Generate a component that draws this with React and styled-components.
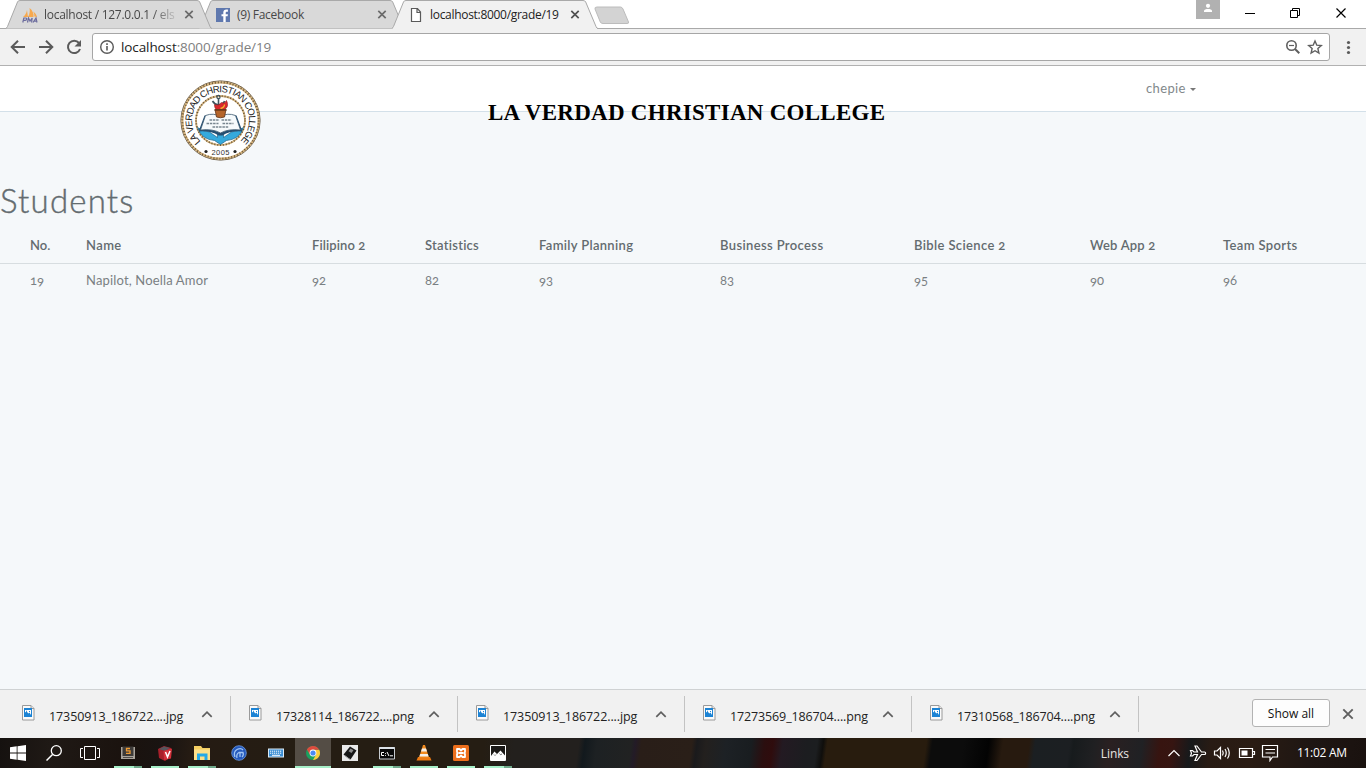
import React from "react";
import styled, { createGlobalStyle, css } from "styled-components";

const ui = `"Open Sans", "Noto Sans", sans-serif`;
const pageFont = `Lato, "Open Sans", sans-serif`;

const Global = createGlobalStyle`
  * { box-sizing: border-box; }
  body { margin: 0; background: #f5f8fa; }
  svg { display: block; flex: none; }
`;

const Screen = styled.div`
  width: 1366px;
  height: 768px;
  overflow: hidden;
  display: flex;
  flex-direction: column;
  font-family: ${ui};
`;

const Label = styled.span`
  white-space: pre;
  letter-spacing: ${(p) => p.$track || 0}px;
`;

/* ---------- browser frame ---------- */

const TabStrip = styled.div`
  height: 29px;
  flex: none;
  display: flex;
  background: #fff;
  box-shadow: inset 0 -1px #a9a9a9;
  padding-left: 6px;
`;

const TabBox = styled.div`
  position: relative;
  z-index: ${(p) => p.$z};
  width: 206px;
  height: 29px;
  flex: none;
  margin-right: -13px;
  padding: 2px 0 2px 16px;
  display: flex;
  align-items: center;
  font-size: 12px;
  color: ${(p) => (p.$active ? "#222" : "#484848")};
`;

const TabShape = styled.svg`
  position: absolute;
  z-index: -1;
  left: 0;
  top: 0;
`;

const TabTitle = styled.div`
  width: 136px;
  margin-left: 6px;
  white-space: nowrap;
  ${(p) => p.$fade && css`
    mask-image: linear-gradient(to right, #000 108px, transparent 136px);
  `}
`;

const NewTab = styled.svg`
  margin: 6px 0 0 9px;
`;

const WindowButtons = styled.div`
  margin-left: auto;
  padding-right: 20px;
  display: flex;
`;

const Toolbar = styled.div`
  height: 37px;
  flex: none;
  display: flex;
  align-items: flex-start;
  padding: 4px 0 0 10px;
  background: #f1f1f1;
  border-bottom: 1px solid #b1b1b1;
`;

const NavIcons = styled.div`
  display: flex;
  gap: 12px;
  width: 82px;
  padding-top: 6px;
`;

const AddressBar = styled.div`
  width: 1238px;
  height: 28px;
  display: flex;
  align-items: center;
  padding: 0 6px;
  background: #fff;
  border: 1px solid #a6a6a6;
  border-radius: 3px;
  font-size: 13.5px;
  color: #808080;
  b { font-weight: 400; color: #222; }
`;

const Url = styled.div`
  flex: 1;
  margin-left: 6px;
  white-space: nowrap;
  letter-spacing: ${(p) => p.$track}px;
`;

/* ---------- web page ---------- */

const Page = styled.main`
  flex: 1;
  background: #f5f8fa;
  font-family: ${pageFont};
  color: #636b6f;
`;

const Header = styled.header`
  height: 46px;
  display: flex;
  align-items: flex-start;
  background: #fff;
  border-bottom: 1px solid #d3e0e9;
  padding-left: 179px;
`;

const Crest = styled.svg`
  margin-top: 13px;
`;

const College = styled.div`
  margin: 34px 0 0 227px;
  width: 400px;
  white-space: nowrap;
  font: bold 23px/26px "Liberation Serif", serif;
  letter-spacing: ${(p) => p.$track}px;
  color: #000;
`;

const UserMenu = styled.div`
  margin: 12px 0 0 258px;
  display: flex;
  align-items: center;
  gap: 4px;
  font-size: 13px;
  line-height: 20px;
  font-weight: 400;
  color: #82888b;
`;

const Caret = styled.i`
  border: 3px solid transparent;
  border-top-color: #777;
  border-bottom: 0;
  margin-top: 2px;
`;

const Title = styled.h1`
  margin: 68px 0 8px;
  font-size: 33px;
  line-height: 40px;
  font-weight: 300;
  -webkit-text-stroke: 0.4px #636b6f;
  letter-spacing: ${(p) => p.$track}px;
`;

const Grades = styled.table`
  width: 100%;
  table-layout: fixed;
  border-collapse: collapse;
  font-size: 13px;
  line-height: 18px;
  text-align: left;
  white-space: nowrap;
  font-feature-settings: "onum";
  tr > :first-child { padding-left: 30px; }
`;

const Th = styled.th`
  padding: 7px 0 8px;
  height: 35px;
  width: ${(p) => p.$w ? p.$w + "px" : "auto"};
  font-weight: 600;
  border-bottom: 1px solid #d7dde0;
`;

const Td = styled.td`
  padding: 7px 0 9px;
  height: 34px;
  color: #7a8083;
`;

/* ---------- download shelf ---------- */

const Shelf = styled.div`
  height: 49px;
  flex: none;
  display: flex;
  align-items: center;
  background: #f1f1f1;
  border-top: 1px solid #cfd2d3;
`;

const Download = styled.div`
  width: ${(p) => (p.$first ? 231 : 227)}px;
  height: 36px;
  padding-left: ${(p) => (p.$first ? 22 : 18)}px;
  display: flex;
  align-items: center;
  border-right: 1px solid #c3c3c3;
  font-size: 12.5px;
  color: #222;
`;

const FileArt = styled.svg`
  margin-bottom: 3px;
`;

const FileName = styled.div`
  width: 141px;
  margin: 5px 11px 0 14px;
  white-space: nowrap;
`;

const ShowAll = styled.button`
  width: 78px;
  height: 28px;
  margin: 0 12px 2px auto;
  padding: 0;
  background: #fdfdfd;
  border: 1px solid #b3b3b3;
  border-radius: 3px;
  font: 12px ${ui};
  color: #111;
  white-space: nowrap;
`;

/* ---------- task bar ---------- */

const Taskbar = styled.div`
  height: 30px;
  flex: none;
  display: flex;
  color: #e8e4e2;
  font-size: 12px;
  background: linear-gradient(98deg, #15110f 0, #1f1915 50px, #1a120e 130px, #191412 165px, #251b13 190px,
    #251d13 290px, #251d13 480px, #23201d 510px, #23201e 574px, #12191d 580px, #1d2123 592px, #212222 626px,
    #231b27 630px, #291e18 636px, #2a1f18 686px, #1a1a1c 691px, #23201e 700px, #1d2125 720px, #191d20 745px,
    #2b0e0f 758px, #2f0c0d 766px, #231a22 776px, #1c1d20 800px, #1c1e20 810px, #0f0e0c 816px, #281c0e 820px,
    #281c0e 918px, #0c0c0c 924px, #0c0c0c 955px, #030303 980px, #271a0f 994px, #271a0f 1020px, #1b1f22 1026px,
    #1c1f22 1060px, #171b1d 1064px, #202022 1085px, #2a2021 1100px, #202124 1132px, #371410 1150px,
    #361511 1162px, #17191b 1180px, #281b14 1200px, #2a1c13 1240px, #1e1613 1300px, #19110e 1366px);
`;

const Slot = styled.div`
  position: relative;
  width: 36px;
  margin-left: ${(p) => p.$gap || 0}px;
  display: flex;
  align-items: center;
  justify-content: center;
  background: ${(p) => (p.$active ? "#544d45" : "transparent")};
`;

const Running = styled.i`
  position: absolute;
  bottom: 0;
  left: ${(p) => (p.$active ? 0 : 4)}px;
  right: ${(p) => (p.$active ? 0 : 4)}px;
  height: 2px;
  background: ${(p) =>
    p.$group ? "linear-gradient(to right, #a6efc8 20px, #6fa88a 20px)" : "#a6efc8"};
`;

const Tray = styled.div`
  margin-left: auto;
  display: flex;
  align-items: center;
  padding-right: 19px;
`;

const TrayIcons = styled.div`
  display: flex;
  align-items: center;
  width: 129px;
  margin-left: 39px;
`;

const Clock = styled.div`
  color: #fff;
  white-space: nowrap;
  width: 50px;
  margin-bottom: 2px;
`;

/* ---------- small drawings ---------- */

const PmaIcon = () => (
  <svg width="16" height="16" viewBox="0 0 16 16">
    <path d="M1 10C3 8.500 4.500 6 5 3l1 7zM6 10C8 7 8 3.500 7.500 1c3 2 4.500 6 4 9zM12.300 9.500C12.500 7 12 6 11 4.500c2 1 3.500 3 4 5.500z" fill="#f7a94e" />
    <path d="M.8 15.500l1-4.500h2c1.500 0 1 2.300-.5 2.300H1.500M5.500 15.500l1-4.500 1.500 3 2.200-3-.6 4.500M11 15.500l3-4.500 1 4.500M12 14.200h3" fill="none" stroke="#6c6c9e" strokeWidth="1.200" />
  </svg>
);

const FacebookIcon = () => (
  <svg width="16" height="16" viewBox="0 0 16 16">
    <path d="M1 1h14v14H1z" fill="#5f78ae" />
    <path d="M8.300 15V9.300H6.500V7.200h1.800V5.500c0-2 1.200-3 3-3h1.600v2.200h-1.100c-.8 0-1.100.4-1.100 1.100v1.400h2.200l-.3 2.100h-1.900V15z" fill="#fff" />
  </svg>
);

const PageIcon = () => (
  <svg width="16" height="16" viewBox="0 0 16 16">
    <path d="M3.500 1.500h6l3 3.500v9.500h-9zM9 1.500V5.500h3.500" fill="#fff" stroke="#5a5a5a" strokeWidth="1.200" />
  </svg>
);

const FileIcon = () => (
  <FileArt width="13" height="17" viewBox="0 0 13 17">
    <path d="M.5 1.500h8.500l3 3v11.500H.5z" fill="#fafafa" stroke="#9a9a9a" />
    <path d="M9 1.500v3h3" fill="#e3e3e3" stroke="#9a9a9a" />
    <path d="M2 4h8v9H2z" fill="#1c83d4" />
    <path d="M3 6h6v5L7.500 8.500 6.500 9.500 4.500 7.500 3 8.500z" fill="#fff" />
    <path d="M4 6.800h1v1H4zM7 7h1v1H7z" fill="#1c83d4" />
  </FileArt>
);

const Chevron = () => (
  <svg width="12" height="7" viewBox="0 0 12 7">
    <path d="M1.300 5.800L6 1.200l4.700 4.600" fill="none" stroke="#5f5f5f" strokeWidth="1.700" />
  </svg>
);

function Tab({ icon, title, active, fade, z, track }) {
  return (
    <TabBox $active={active} $z={z}>
      <TabShape width="206" height="29" viewBox="0 0 206 29">
        <path
          d="M0 28.500L1.500 26.500 11.500 2Q12 .5 14 .5H191Q193 .5 193.700 2L204 26.500Q204.700 28.500 206 28.500"
          fill={active ? "#f1f1f1" : "#d9d9d9"}
          stroke="#a9a9a9"
        />
        {active && <path d="M1 28.500H205" stroke="#f1f1f1" strokeWidth="1.200" />}
      </TabShape>
      {icon}
      <TabTitle $fade={fade}>
        <Label $track={track}>{title}</Label>
      </TabTitle>
      <svg width="18" height="9" viewBox="0 0 18 9">
        <path d="M5.300.8l7.400 7.400M12.700.8L5.300 8.200" stroke={active ? "#505050" : "#6b6b6b"} strokeWidth="1.700" />
      </svg>
    </TabBox>
  );
}

function CollegeCrest() {
  return (
    <Crest width="82" height="83" viewBox="-41.500 -41.500 82 83">
      <defs>
        <path id="ring" d="M-21.500 22.500A31 31 0 1 1 21.500 22.500" />
      </defs>
      <circle r="39.600" fill="#fff" stroke="#5a4931" strokeWidth=".9" />
      <circle r="38.200" fill="none" stroke="#d3b27c" strokeWidth="2.200" />
      <circle r="38.200" fill="none" stroke="#6a5638" strokeWidth="2" strokeDasharray="1 2" />
      <circle r="24.500" fill="#fff" stroke="#d3b27c" strokeWidth="1.800" />
      <circle r="24.500" fill="none" stroke="#6a5638" strokeWidth="1.800" strokeDasharray="1 1.900" />
      <text fontFamily="Liberation Sans, sans-serif" fontSize="9.500" fill="#222" dy="2.500">
        <textPath href="#ring" textLength="146">LA VERDAD CHRISTIAN COLLEGE</textPath>
      </text>
      <text y="34.500" textAnchor="middle" fontFamily="Liberation Sans, sans-serif" fontSize="7.500" textLength="18" fill="#333">2005</text>
      <circle cx="-14.500" cy="31" r="1.600" fill="#222" />
      <circle cx="14.500" cy="31" r="1.600" fill="#222" />
      <path d="M-23 7Q-17 11-11 11.500L-3 17V12H3V17L11 11.500Q17 11 23 7 19 19 6 20L0 24-6 20Q-19 19-23 7z" fill="#35a9dc" stroke="#1c6389" strokeWidth=".7" />
      <path d="M-16-5L-22 11Q-10 10-2 15H2Q10 10 22 11L16-5z" fill="#244f73" />
      <path d="M-15-5Q-7-8 0-4 7-8 15-5L20 9.500Q8 8 0 12.500-8 8-20 9.500z" fill="#f6fafc" stroke="#3c5970" strokeWidth=".8" />
      <path d="M-11-.5H-1M1-.5H11M-14 3H-2M2 3H13M-8 6.500H8" stroke="#788690" strokeWidth="1.300" strokeDasharray="2.500 .8" />
      <path d="M-2-22V-15M-8-19.500Q-6-16-2-15.500 3-16 4-19.500" stroke="#40555f" strokeWidth="1.600" fill="none" />
      <circle cy="-23.500" cx="-2" r="1.600" fill="none" stroke="#40555f" strokeWidth="1.200" />
      <path d="M-6-16Q-6-11-3-11H4Q9-14 6-20 4-16 1-18-2-14-6-16z" fill="#d9282b" stroke="#8b1a1d" strokeWidth=".6" />
      <path d="M0-12Q4-13 4-16" stroke="#f7b42c" strokeWidth="1.300" fill="none" />
      <path d="M-5.500-11H5.500L4-3.500Q0-2-4-3.500z" fill="#b5652a" stroke="#5d3116" strokeWidth=".8" />
      <path d="M-6-10.500H6" stroke="#6e3a19" strokeWidth="1.600" />
    </Crest>
  );
}

/* heading, column width, value, heading tracking, value tracking */
const columns = [
  ["No.", 86, "19", 0, 0],
  ["Name", 226, "Napilot, Noella Amor", 0.4, 0.16],
  ["Filipino 2", 113, "92", 0.1, 0],
  ["Statistics", 114, "82", 0.25, 0],
  ["Family Planning", 181, "93", 0.33, 0],
  ["Business Process", 194, "83", 0.37, 0],
  ["Bible Science 2", 176, "95", 0.37, 0],
  ["Web App 2", 133, "90", 0.2, 0],
  ["Team Sports", 0, "96", 0.36, 0],
];

const files = [
  "17350913_186722....jpg",
  "17328114_186722....png",
  "17350913_186722....jpg",
  "17273569_186704....png",
  "17310568_186704....png",
];

const apps = [
  {
    run: "group",
    art: (
      <>
        <path d="M1 2h14v12H1z" fill="#a9a39b" /><path d="M2.500 1.500h11v9.500h-11z" fill="#3d3a38" />
        <path d="M10 3.500H6.500v2.300H10v2.500H6" fill="none" stroke="#ef9b33" strokeWidth="1.300" />
        <path d="M3 12.500h10" stroke="#524e4a" />
      </>
    ),
  },
  {
    run: "one",
    art: (
      <>
        <path d="M1 4l6-3 7 2v9l-6 4-6-3z" fill="#a81f2a" /><path d="M2 4l5-2.500 6 1.500-5 3z" fill="#56555d" />
        <path d="M6.500 6L15 3.500l-1 10L7 15z" fill="#d3303a" /><path d="M8.500 7l2 5 2.500-6" fill="none" stroke="#fff" strokeWidth="1.500" />
      </>
    ),
  },
  {
    run: "group",
    art: (
      <>
        <path d="M0 1h7l1.500 2H16v12H0z" fill="#f5cf62" /><path d="M0 4.500h16V15H0z" fill="#fde08a" />
        <path d="M3 15V8.500h10.500V15h-3v-3.500H6V15z" fill="#25a9e8" />
      </>
    ),
  },
  {
    art: (
      <>
        <circle cx="8" cy="8" r="7.300" fill="#2459bd" stroke="#6f9be0" strokeWidth=".8" />
        <path d="M4 12Q2 7 6 4.500 10 2.500 12 5M6 13Q5 9 8 7.500L12 7.500Q13 10 11 12M9 8v4" fill="none" stroke="#9fc4f2" strokeWidth="1.300" />
      </>
    ),
  },
  {
    art: (
      <>
        <path d="M0 3.500h16v9H0z" fill="#dceaf5" /><path d="M1 4.500h14v7H1z" fill="#3b8ed4" />
        <path d="M2 6.200h12M2 8.200h12" stroke="#fff" strokeDasharray="1.200 .8" /><path d="M4 10.300h8" stroke="#fff" />
      </>
    ),
  },
  {
    run: "one",
    active: true,
    art: (
      <>
        <circle cx="8" cy="8" r="7" fill="#1aa15f" />
        <path d="M8 4.700H14.200A7 7 0 0 1 8 15L11 9.700z" fill="#fccd3d" />
        <path d="M1.900 4.500A7 7 0 0 1 14.200 4.700H8L5 9.700z" fill="#dd4b3e" />
        <circle cx="8" cy="8" r="3.400" fill="#fff" /><circle cx="8" cy="8" r="2.600" fill="#4a8af4" />
      </>
    ),
  },
  {
    art: (
      <>
        <path d="M0 0h16v16H0z" fill="#e9e9e9" /><path d="M8 1.500l6.500 4-6 9L1.500 9.500z" fill="#161616" />
        <path d="M8.500 3.500l3 1.800-2 2.700-3-1.800z" fill="#8a8a8a" /><path d="M2.500 10.500l5.500 4" stroke="#999" />
      </>
    ),
  },
  {
    run: "group",
    art: (
      <>
        <path d="M.5 2.500h15v11.500H.5z" fill="#080808" stroke="#c7cbd0" /><path d="M.5 3h15" stroke="#dce2e8" strokeWidth="2" />
        <path d="M5 7.500H2.500v3H5M6.500 8v.8M6.500 10v.8M8 7l2 4M11 10.800h3" fill="none" stroke="#fff" strokeWidth="1" />
      </>
    ),
  },
  {
    run: "one",
    art: (
      <>
        <path d="M2 12h12l1.500 3.500H.5z" fill="#ed7a13" /><path d="M7 0h2l4 12.500H3z" fill="#f28a1e" />
        <path d="M6 3.500h4l1 3H5zM4.200 9h7.600l.8 2.500H3.400z" fill="#f3f0ec" />
      </>
    ),
  },
  {
    run: "one",
    art: (
      <>
        <rect width="16" height="16" rx="1.500" fill="#ed6f1c" />
        <path d="M4 4h2.500L8 5.500 9.500 4H12v3l-1 1 1 1v3H9.500L8 10.500 6.500 12H4V9l1-1-1-1zM6 8h4" fill="none" stroke="#fff" strokeWidth="1.800" strokeLinejoin="round" />
      </>
    ),
  },
  {
    run: "group",
    art: (
      <>
        <path d="M.5 .5h15v15H.5z" fill="#1b1917" stroke="#fff" />
        <path d="M1 11L4.500 6.500 7 9l3.500-3.500L15 10.500V15H1z" fill="#fff" />
        <path d="M4 9.500l1 1 1-1M9.500 8.500l1 1.200 1.500-.7" fill="none" stroke="#555" strokeWidth=".8" />
      </>
    ),
  },
];

export default function App() {
  return (
    <Screen>
      <Global />
      <TabStrip>
        <Tab z={2} icon={<PmaIcon />} title="localhost / 127.0.0.1 / els" fade track={-0.27} />
        <Tab z={1} icon={<FacebookIcon />} title="(9) Facebook" track={-0.3} />
        <Tab z={3} active icon={<PageIcon />} title="localhost:8000/grade/19" track={-0.3} />
        <NewTab width="36" height="19" viewBox="0 0 36 19">
          <path d="M1 3Q.5 1 3 1h23.500Q28 1 29 3l5.500 13q.5 1.500-1.500 1.500H9Q7 17.500 6.300 16z" fill="#d3d3d3" stroke="#bcbcbc" />
        </NewTab>
        <WindowButtons>
          <svg width="150" height="26" viewBox="1196 0 150 26">
            <path d="M1196 0h24v19h-24z" fill="#b1b1b1" />
            <circle cx="1208" cy="5.800" r="2.100" fill="#fff" />
            <path d="M1204 12v-1.200c0-2.300 8-2.300 8 0V12z" fill="#fff" />
            <path d="M1245 13.500h10M1290.500 10.500h7v7h-7zM1292.500 10.500v-2h7v7h-2" fill="none" stroke="#000" />
            <path d="M1336.500 8.500l9 9M1345.500 8.500l-9 9" stroke="#000" strokeWidth="1.200" />
          </svg>
        </WindowButtons>
      </TabStrip>
      <Toolbar>
        <NavIcons>
          <svg width="16" height="16" viewBox="0 0 16 16"><path d="M15 8H2M8 1.700L1.700 8 8 14.300" fill="none" stroke="#5a5a5a" strokeWidth="2" /></svg>
          <svg width="16" height="16" viewBox="0 0 16 16"><path d="M1 8h13M8 1.700L14.300 8 8 14.300" fill="none" stroke="#5a5a5a" strokeWidth="2" /></svg>
          <svg width="16" height="16" viewBox="0 0 16 16"><path d="M13 4A6.200 6.200 0 1 0 14 10" fill="none" stroke="#5a5a5a" strokeWidth="2" /><path d="M15 1v6.500H8.500z" fill="#5a5a5a" /></svg>
        </NavIcons>
        <AddressBar>
          <svg width="16" height="16" viewBox="0 0 16 16">
            <circle cx="8" cy="8" r="6.300" fill="none" stroke="#5a5a5a" strokeWidth="1.400" />
            <path d="M8 7v4.500M8 4.300v1.600" stroke="#5a5a5a" strokeWidth="1.600" />
          </svg>
          <Url $track={-0.1}><b>localhost</b>:8000/grade/19</Url>
          <svg width="38" height="16" viewBox="0 0 38 16">
            <g fill="none" stroke="#5f5f5f">
              <circle cx="6.500" cy="6.500" r="4.700" strokeWidth="1.600" />
              <path d="M4 6.500h5" strokeWidth="1.200" /><path d="M10 10l4.300 4.300" strokeWidth="2" />
              <path d="M30 2l1.800 4.200 4.500.4-3.400 3 1 4.400L30 11.700 26.100 14l1-4.400-3.400-3 4.500-.4z" strokeWidth="1.400" />
            </g>
          </svg>
        </AddressBar>
        <svg width="36" height="28" viewBox="0 0 36 28">
          <g fill="#5a5a5a"><circle cx="18.500" cy="9.500" r="1.600" /><circle cx="18.500" cy="14.500" r="1.600" /><circle cx="18.500" cy="19.500" r="1.600" /></g>
        </svg>
      </Toolbar>

      <Page>
        <Header>
          <CollegeCrest />
          <College $track={0.27}>LA VERDAD CHRISTIAN COLLEGE</College>
          <UserMenu><Label $track={0.35}>chepie</Label><Caret /></UserMenu>
        </Header>
        <Title $track={1.2}>Students</Title>
        <Grades>
          <thead>
            <tr>{columns.map(([name, w, , t]) => <Th key={name} $w={w}><Label $track={t}>{name}</Label></Th>)}</tr>
          </thead>
          <tbody>
            <tr>{columns.map(([name, , value, , t]) => <Td key={name}><Label $track={t}>{value}</Label></Td>)}</tr>
          </tbody>
        </Grades>
      </Page>

      <Shelf>
        {files.map((f, i) => (
          <Download key={i} $first={i === 0}>
            <FileIcon />
            <FileName><Label $track={f.endsWith("jpg") ? -0.09 : -0.13}>{f}</Label></FileName>
            <Chevron />
          </Download>
        ))}
        <ShowAll><Label>Show all</Label></ShowAll>
        <svg width="24" height="12" viewBox="0 0 24 12"><path d="M1.300 1.300l9.400 9.400M10.700 1.300l-9.400 9.400" stroke="#5f5f5f" strokeWidth="1.900" /></svg>
      </Shelf>

      <Taskbar>
        <Slot>
          <svg width="16" height="16" viewBox="0 0 16 16"><path d="M0 2.300l6.700-1v6.300H0zM7.500 1.200L16 0v7.600H7.500zM0 8.400h6.700v6.300L0 13.800zM7.500 8.400H16V16l-8.500-1.200z" fill="#fff" /></svg>
        </Slot>
        <Slot>
          <svg width="16" height="16" viewBox="0 0 16 16"><path d="M6.500 9.500L.5 15.500" stroke="#fff" strokeWidth="1.500" /><circle cx="10.300" cy="5.700" r="5" fill="none" stroke="#fff" strokeWidth="1.300" /></svg>
        </Slot>
        <Slot>
          <svg width="20" height="14" viewBox="0 0 20 14"><path d="M4.500.5h11v13h-11zM3 2.500H.5v9H3M17 2.500h2.500v9H17" fill="none" stroke="#fff" /></svg>
        </Slot>
        {apps.map((a, i) => (
          <Slot key={i} $active={a.active} $gap={i === 0 ? 2 : 1}>
            <svg width="16" height="16" viewBox="0 0 16 16">{a.art}</svg>
            {a.run && <Running $active={a.active} $group={a.run === "group"} />}
          </Slot>
        ))}
        <Tray>
          <Label $track={-0.1}>Links</Label>
          <TrayIcons>
            <svg width="112" height="18" viewBox="1168 744 112 18">
              <g fill="none" stroke="#fff" strokeWidth="1.200">
                <path d="M1168.500 756l5.500-5.500 5.500 5.500" />
                <path d="M1190.500 750.500h2l1.500 1.500h3.500l-2.500-6h2l4.500 6h3c1.500 0 1.500 2.500 0 2.500h-3l-4.500 6h-2l2.500-6H1194l-1.500 1.500h-2l1-2.800z" />
                <path d="M1214.500 751h2.500l3.500-3.500v11l-3.500-3.500h-2.500zM1222.500 750.500q1.500 2.500 0 5M1225 749q2.500 4 0 8M1227.500 747.500q3.500 5.500 0 11" />
                <path d="M1239.500 748.500h13v9h-13zM1253 751.500h1.500v3h-1.500" />
                <path d="M1262.500 745.500h15v11.500h-5l-2.500 3.500v-3.500h-7.500zM1265.500 749.500h9.500M1265.500 753h9.500" />
              </g>
              <path d="M1241.500 750.500h6v5h-6z" fill="#fff" />
            </svg>
          </TrayIcons>
          <Clock><Label $track={-0.3}>11:02 AM</Label></Clock>
        </Tray>
      </Taskbar>
    </Screen>
  );
}
